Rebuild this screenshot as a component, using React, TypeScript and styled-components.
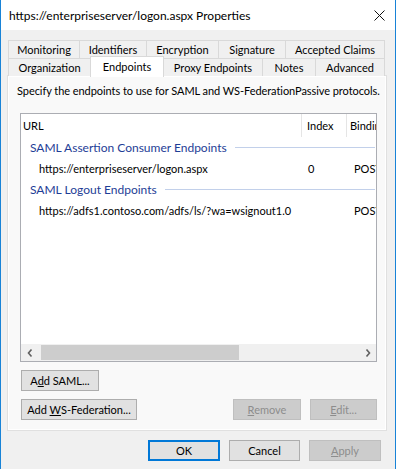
import styled, { createGlobalStyle } from "styled-components";

const GlobalStyle = createGlobalStyle`
  body {
    margin: 0;
    background: #f0f0f0;
    font-family: Lato, "Noto Sans", sans-serif;
    font-size: 11px;
    color: #000;
  }
`;

const Window = styled.div`
  width: 396px;
  height: 469px;
  box-sizing: border-box;
  border-left: 1px solid #1883d7;
  border-right: 1px solid #1883d7;
  background: #f0f0f0;
  display: flex;
  flex-direction: column;
  overflow: hidden;
`;

const TitleBar = styled.div`
  height: 30px;
  flex: none;
  background: #fff;
  display: flex;
  align-items: center;
  justify-content: space-between;
  padding: 0 10px 0 8px;
`;

const Title = styled.span`
  font-size: 12px;
`;

const Body = styled.div`
  padding: 10px 8px 0 7px;
  display: flex;
  flex-direction: column;
`;

const TabRow = styled.div`
  display: flex;
  height: 18px;
`;

const Tab = styled.div<{ $w: number; $active?: boolean }>`
  width: ${(p) => p.$w}px;
  flex: none;
  box-sizing: border-box;
  border: 1px solid #d9d9d9;
  border-bottom: none;
  margin-left: -1px;
  display: flex;
  align-items: center;
  justify-content: center;
  background: ${(p) => (p.$active ? "#fff" : "#f0f0f0")};
  position: relative;
  ${(p) =>
    p.$active &&
    `
    height: 21px;
    margin-top: -2px;
    z-index: 1;
    padding-bottom: 2px;
  `}
  &:first-child {
    margin-left: 0;
  }
`;

const Panel = styled.div`
  width: 378px;
  height: 354px;
  box-sizing: border-box;
  background: #f9f9f9;
  border: 1px solid #fff;
  box-shadow: 0 0 0 1px #e0e0e0;
  display: flex;
  flex-direction: column;
`;

const Description = styled.div`
  padding: 6px 0 0 8px;
  line-height: 16px;
  white-space: nowrap;
  letter-spacing: -0.06px;
`;

const Area = styled.div`
  padding: 14px 8px 0 11px;
  display: flex;
  flex-direction: column;
`;

const ListBox = styled.div`
  height: 249px;
  box-sizing: border-box;
  border: 1px solid #abadb3;
  background: #fff;
  display: flex;
  flex-direction: column;
  overflow: hidden;
`;

const HeaderRow = styled.div`
  display: flex;
  height: 23px;
  flex: none;
`;

const HeadCell = styled.div<{ $w?: number; $pad: number; $sep?: boolean }>`
  ${(p) => (p.$w ? `width: ${p.$w}px; flex: none;` : "flex: 1;")}
  box-sizing: border-box;
  padding-left: ${(p) => p.$pad}px;
  display: flex;
  align-items: center;
  white-space: nowrap;
  overflow: hidden;
  border-right: ${(p) => (p.$sep ? "1px solid #e5e5e5" : "none")};
`;

const GroupRow = styled.div`
  height: 21px;
  display: flex;
  align-items: center;
  padding: 0 1px 0 9px;
  color: #1e3d96;
  font-size: 12px;
  white-space: nowrap;
  &::after {
    content: "";
    flex: 1;
    height: 1px;
    background: #c2d0ea;
    margin-left: 8px;
  }
`;

const DataRow = styled.div`
  height: 21px;
  display: flex;
  align-items: center;
  white-space: nowrap;
`;

const DataCell = styled.div<{ $w?: number; $pad: number }>`
  ${(p) => (p.$w ? `width: ${p.$w}px; flex: none;` : "flex: 1;")}
  box-sizing: border-box;
  padding-left: ${(p) => p.$pad}px;
  overflow: hidden;
`;

const Filler = styled.div`
  flex: 1;
`;

const HScroll = styled.div`
  height: 17px;
  flex: none;
  background: #f0f0f0;
  display: flex;
  align-items: center;
`;

const Arrow = styled.div`
  width: 17px;
  height: 17px;
  flex: none;
  display: flex;
  align-items: center;
  justify-content: center;
`;

const Track = styled.div`
  flex: 1;
  height: 15px;
  display: flex;
  padding-left: 3px;
`;

const Thumb = styled.div`
  width: 198px;
  height: 100%;
  background: #cdcdcd;
`;

const ButtonRow = styled.div<{ $top: number }>`
  display: flex;
  gap: 9px;
  margin-top: ${(p) => p.$top}px;
  padding-left: 1px;
`;

const Spacer = styled.div`
  flex: 1;
`;

const Button = styled.div<{ $w: number; $disabled?: boolean; $default?: boolean }>`
  width: ${(p) => p.$w}px;
  height: 21px;
  box-sizing: border-box;
  flex: none;
  display: flex;
  align-items: center;
  justify-content: center;
  background: ${(p) => (p.$disabled ? "#cccccc" : "#e1e1e1")};
  border: 1px solid
    ${(p) => (p.$default ? "#0078d7" : p.$disabled ? "#bfbfbf" : "#adadad")};
  box-shadow: ${(p) => (p.$default ? "inset 0 0 0 1px #0078d7" : "none")};
  color: ${(p) => (p.$disabled ? "#8d8d8d" : "#000")};
  white-space: nowrap;
`;

const Label = styled.span`
  white-space: pre;
`;

const Footer = styled.div`
  display: flex;
  justify-content: flex-end;
  gap: 9px;
  padding: 10px 6px 0 0;
`;

const U = styled.span`
  text-decoration: underline;
`;

function CloseIcon() {
  return (
    <svg width="11" height="11" viewBox="0 0 11 11">
      <path d="M0.5 0.5 L10.5 10.5 M10.5 0.5 L0.5 10.5" stroke="#111" strokeWidth="1" />
    </svg>
  );
}

function Chevron({ dir }: { dir: "left" | "right" }) {
  return (
    <svg width="6" height="8" viewBox="0 0 6 8">
      <path
        d={dir === "left" ? "M4.5 0.5 L1.5 4 L4.5 7.5" : "M1.5 0.5 L4.5 4 L1.5 7.5"}
        fill="none"
        stroke="#606060"
        strokeWidth="1.6"
      />
    </svg>
  );
}

const backTabs: [string, number][] = [
  ["Monitoring", 72],
  ["Identifiers", 68],
  ["Encryption", 73],
  ["Signature", 68],
  ["Accepted Claims", 100],
];

const frontTabs: [string, number][] = [
  ["Organization", 83],
  ["Endpoints", 74],
  ["Proxy Endpoints", 100],
  ["Notes", 54],
  ["Advanced", 70],
];

export default function App() {
  return (
    <>
      <GlobalStyle />
      <Window>
        <TitleBar>
          <Title>https://enterpriseserver/logon.aspx Properties</Title>
          <CloseIcon />
        </TitleBar>
        <Body>
          <TabRow>
            {backTabs.map(([t, w]) => (
              <Tab key={t} $w={w}>
                {t}
              </Tab>
            ))}
          </TabRow>
          <TabRow>
            {frontTabs.map(([t, w]) => (
              <Tab key={t} $w={w} $active={t === "Endpoints"}>
                {t}
              </Tab>
            ))}
          </TabRow>
          <Panel>
            <Description>
              Specify the endpoints to use for SAML and WS-FederationPassive protocols.
            </Description>
            <Area>
              <ListBox>
                <HeaderRow>
                  <HeadCell $w={281} $pad={2} $sep>
                    URL
                  </HeadCell>
                  <HeadCell $w={45} $pad={5} $sep>
                    Index
                  </HeadCell>
                  <HeadCell $pad={3}>Binding</HeadCell>
                </HeaderRow>
                <GroupRow>SAML Assertion Consumer Endpoints</GroupRow>
                <DataRow>
                  <DataCell $w={281} $pad={18}>
                    https://enterpriseserver/logon.aspx
                  </DataCell>
                  <DataCell $w={46} $pad={6}>
                    0
                  </DataCell>
                  <DataCell $pad={6}>POST</DataCell>
                </DataRow>
                <GroupRow>SAML Logout Endpoints</GroupRow>
                <DataRow>
                  <DataCell $w={281} $pad={18}>
                    https://adfs1.contoso.com/adfs/ls/?wa=wsignout1.0
                  </DataCell>
                  <DataCell $w={46} $pad={6}></DataCell>
                  <DataCell $pad={6}>POST</DataCell>
                </DataRow>
                <Filler />
                <HScroll>
                  <Arrow>
                    <Chevron dir="left" />
                  </Arrow>
                  <Track>
                    <Thumb />
                  </Track>
                  <Arrow>
                    <Chevron dir="right" />
                  </Arrow>
                </HScroll>
              </ListBox>
              <ButtonRow $top={8}>
                <Button $w={78}>
                  <Label>
                    A<U>d</U>d SAML...
                  </Label>
                </Button>
              </ButtonRow>
              <ButtonRow $top={8}>
                <Button $w={116}>
                  <Label>
                    Add <U>W</U>S-Federation...
                  </Label>
                </Button>
                <Spacer />
                <Button $w={68} $disabled>
                  <Label>
                    <U>R</U>emove
                  </Label>
                </Button>
                <Button $w={67} $disabled>
                  <Label>
                    <U>E</U>dit...
                  </Label>
                </Button>
              </ButtonRow>
            </Area>
          </Panel>
          <Footer>
            <Button $w={72} $default>
              <Label>OK</Label>
            </Button>
            <Button $w={71}>
              <Label>Cancel</Label>
            </Button>
            <Button $w={72} $disabled>
              <Label>
                <U>A</U>pply
              </Label>
            </Button>
          </Footer>
        </Body>
      </Window>
    </>
  );
}
